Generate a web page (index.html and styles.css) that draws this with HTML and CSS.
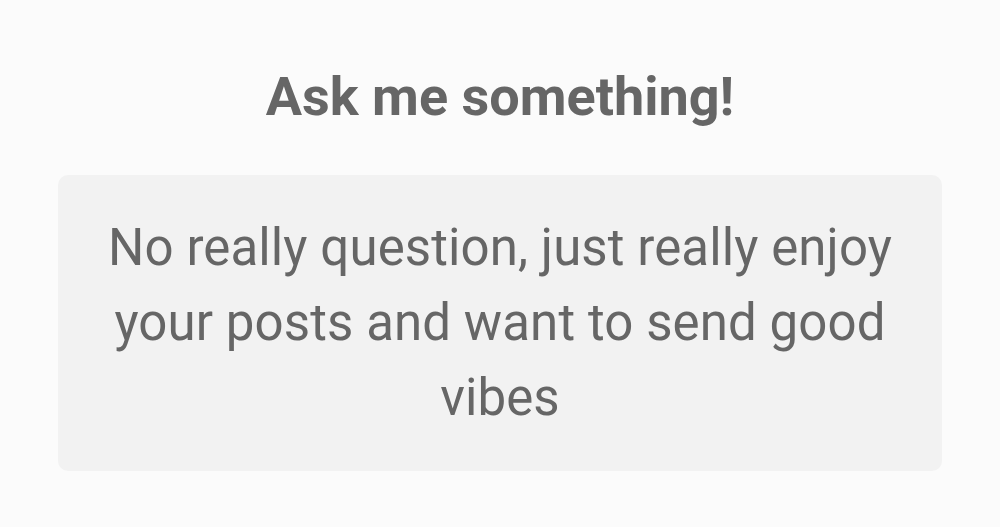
FILE: index.html
```html
<!DOCTYPE html>
<html lang="en">

<head>
    <meta charset="UTF-8">
    <meta name="viewport" content="width=device-width, initial-scale=1.0">
    <link rel="stylesheet" href="styles.css">
    <title>Ask me something</title>
</head>

<body>

    <div class="card">
        <h1 class="title">Ask me something!</h1>
        <div class="question">
            No really question, just really enjoy your posts and want to send good vibes
        </div>
    </div>

</body>

</html>
```

FILE: styles.css
```css
body {
    margin: 0;
    font-family: Roboto, 'Liberation Sans', sans-serif;
    background-color: #fbfbfb;
    color: #666;
}

.card {
    display: flex;
    flex-direction: column;
    align-items: center;
    padding: 0 57px;
}

.title {
    margin: 65px 0 0;
    font-size: 54px;
    font-weight: 700;
    line-height: 64px;
    color: #666;
}

.question {
    box-sizing: border-box;
    width: 884px;
    margin-top: 46px;
    padding: 35px 40px 36px;
    background-color: #f2f2f2;
    border-radius: 10px;
    font-size: 51px;
    letter-spacing: 0.1px;
    line-height: 75px;
    text-align: center;
    color: #666;
}
```
